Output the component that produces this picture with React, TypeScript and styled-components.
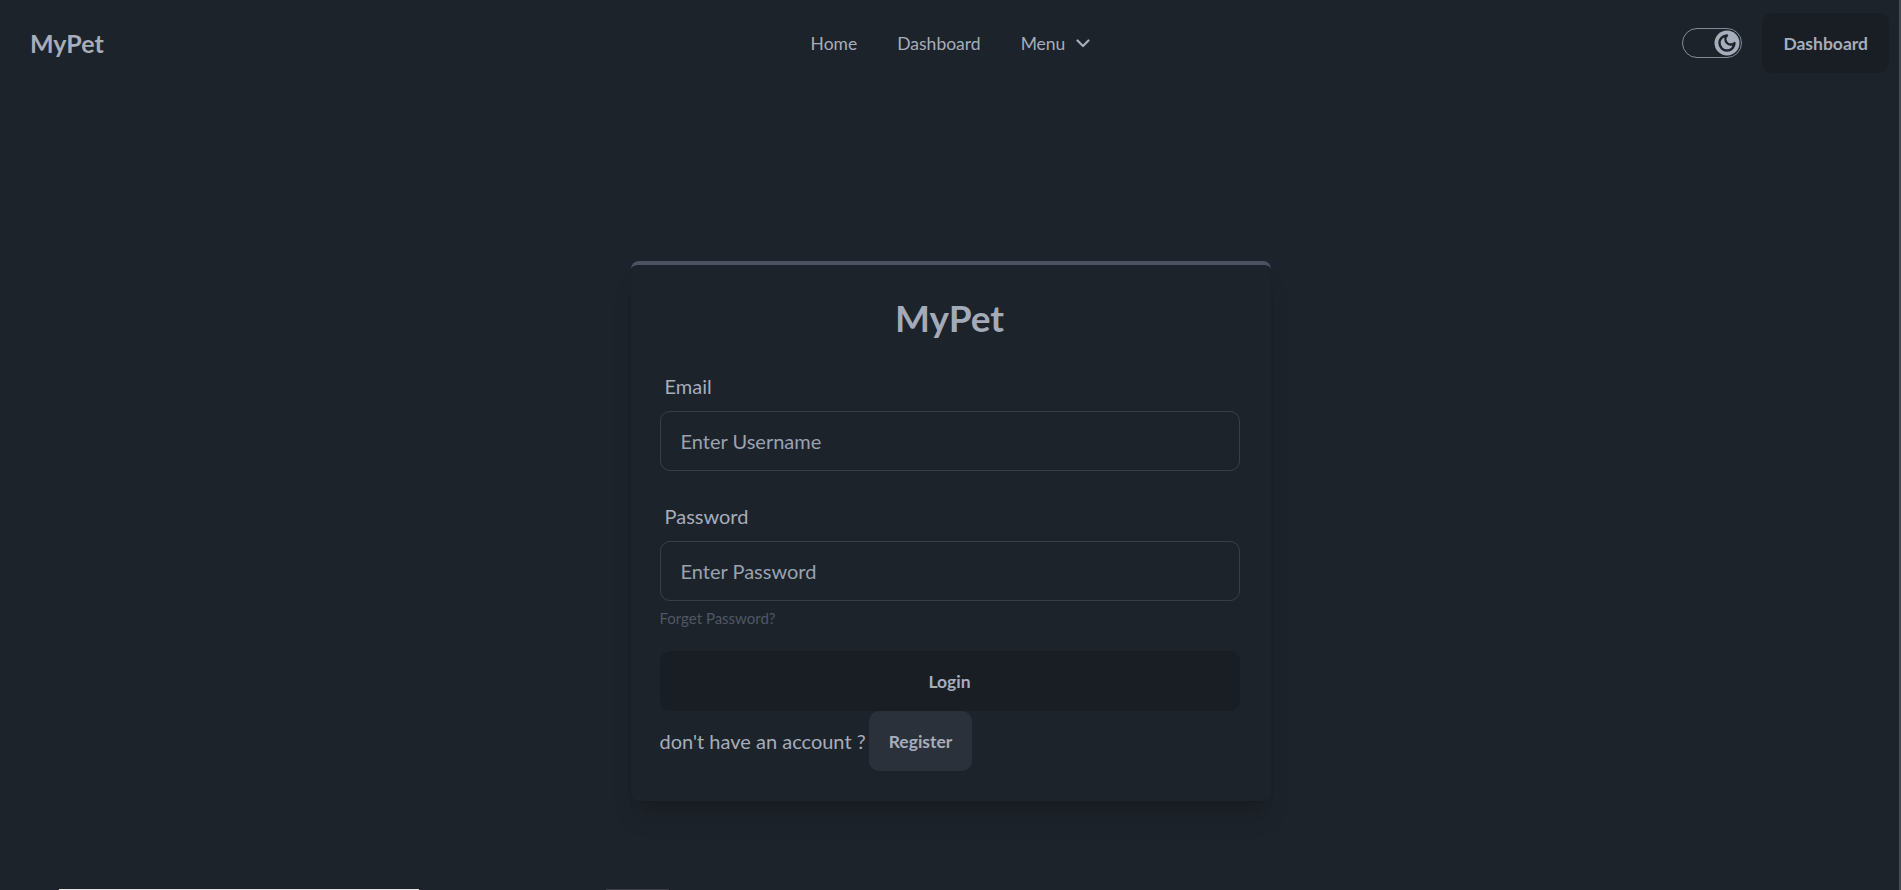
import React from "react";
import styled, { createGlobalStyle } from "styled-components";

const GlobalStyle = createGlobalStyle`
  html, body {
    margin: 0;
    padding: 0;
    background: #1d232a;
    overflow: hidden;
  }
  body {
    font-family: Lato, "Noto Sans", sans-serif;
    color: #a6adbb;
  }
  * { box-sizing: border-box; }
`;

const Page = styled.div`
  min-height: 100vh;
  background: #1d232a;
`;

const NavBar = styled.header`
  display: grid;
  grid-template-columns: 1fr auto 1fr;
  align-items: center;
  height: 86px;
  padding: 13px 12px 13px 10px;
`;

const Brand = styled.a`
  justify-self: start;
  display: inline-flex;
  align-items: center;
  height: 60px;
  padding: 0 20px;
  font-size: 25px;
  font-weight: 700;
  color: #a6adbb;
  text-decoration: none;
`;

const NavMenu = styled.ul`
  display: flex;
  align-items: center;
  list-style: none;
  margin: 0;
  padding: 0 0 0 2px;
`;

const NavLink = styled.li`
  display: flex;
  align-items: center;
  gap: 11px;
  padding: 8px 20px;
  font-size: 17.5px;
  color: #a6adbb;
`;

const NavEnd = styled.div`
  justify-self: end;
  display: flex;
  align-items: center;
  gap: 20px;
`;

const Toggle = styled.span`
  display: inline-flex;
  align-items: center;
  justify-content: flex-end;
  width: 60px;
  height: 30px;
  border: 1.5px solid rgba(166, 173, 187, 0.75);
  border-radius: 15px;
  padding: 0 1px;
`;

const Knob = styled.svg`
  display: block;
`;

const GhostButton = styled.button`
  height: 60px;
  padding: 0 21px;
  border: none;
  border-radius: 10px;
  background: #191e24;
  color: #a6adbb;
  font-family: inherit;
  font-size: 17.5px;
  font-weight: 700;
`;

const Hero = styled.main`
  min-height: 100vh;
  display: flex;
  align-items: center;
  justify-content: center;
`;

const Card = styled.section`
  width: 640px;
  background: #1d232a;
  border-top: 4px solid #4b5362;
  border-radius: 8px;
  box-shadow: 0 20px 25px -5px rgba(0, 0, 0, 0.13), 0 8px 10px -6px rgba(0, 0, 0, 0.13);
`;

const CardBody = styled.div`
  padding: 30px 31px 30px 29px;
  display: flex;
  flex-direction: column;
`;

const Title = styled.h1`
  margin: 0;
  text-align: center;
  font-size: 37px;
  line-height: 45px;
  font-weight: 700;
  color: #a3aab8;
`;

const Form = styled.form`
  margin-top: 21px;
  display: flex;
  flex-direction: column;
`;

const Field = styled.div<{ $spaced?: boolean }>`
  display: flex;
  flex-direction: column;
  margin-top: ${(p) => (p.$spaced ? "20px" : "0")};
`;

const FieldLabel = styled.label`
  display: block;
  padding: 10px 5px;
  font-size: 20px;
  line-height: 30px;
  color: #a6adbb;
`;

const TextInput = styled.input`
  width: 100%;
  height: 60px;
  padding: 0 20px;
  border: 1px solid rgba(166, 173, 187, 0.2);
  border-radius: 10px;
  background: transparent;
  font-family: inherit;
  font-size: 20px;
  color: #a6adbb;
  outline: none;
  &::placeholder {
    color: #9aa2b0;
  }
`;

const ForgotLink = styled.a`
  display: block;
  padding: 10px 0;
  font-size: 15px;
  line-height: 15px;
  color: #4f5764;
  text-decoration: none;
`;

const LoginButton = styled.button`
  margin-top: 15px;
  width: 100%;
  height: 60px;
  border: none;
  border-radius: 10px;
  background: #191e24;
  color: #a6adbb;
  font-family: inherit;
  font-size: 17.5px;
  font-weight: 700;
`;

const RegisterRow = styled.div`
  display: flex;
  align-items: center;
  font-size: 20px;
  color: #a6adbb;
`;

const RegisterButton = styled.button`
  margin-left: 3px;
  height: 60px;
  padding: 0 20px;
  border: none;
  border-radius: 10px;
  background: #2a313a;
  color: #a6adbb;
  font-family: inherit;
  font-size: 17.5px;
  font-weight: 700;
`;

const EdgeStrip = styled.div`
  position: fixed;
  top: 0;
  right: 0;
  width: 2px;
  height: 100vh;
  background: #464b52;
`;

const BottomBar = styled.div<{ $left: number; $width: number; $color: string }>`
  position: fixed;
  bottom: 0;
  left: ${(p) => p.$left}px;
  width: ${(p) => p.$width}px;
  height: 1px;
  background: ${(p) => p.$color};
`;

const Chevron = () => (
  <svg width="14" height="9" viewBox="0 0 14 9" fill="none">
    <path d="M1.5 1.5 L7 7 L12.5 1.5" stroke="#a6adbb" strokeWidth="2.2" strokeLinecap="round" strokeLinejoin="round" />
  </svg>
);

export default function App() {
  return (
    <Page>
      <GlobalStyle />
      <NavBar>
        <Brand>MyPet</Brand>
        <NavMenu>
          <NavLink>Home</NavLink>
          <NavLink>Dashboard</NavLink>
          <NavLink>
            Menu
            <Chevron />
          </NavLink>
        </NavMenu>
        <NavEnd>
          <Toggle>
            <Knob width="26" height="26" viewBox="0 0 26 26">
              <circle cx="13" cy="13" r="12.5" fill="#a6adbb" />
              <path
                d="M13 5.5a5 5 0 0 0 7.5 7.5 7.5 7.5 0 1 1-7.5-7.5Z"
                fill="none"
                stroke="#1d232a"
                strokeWidth="2.4"
                strokeLinejoin="round"
              />
            </Knob>
          </Toggle>
          <GhostButton>Dashboard</GhostButton>
        </NavEnd>
      </NavBar>
      <Hero>
        <Card>
          <CardBody>
            <Title>MyPet</Title>
            <Form onSubmit={(e) => e.preventDefault()}>
              <Field>
                <FieldLabel>Email</FieldLabel>
                <TextInput type="text" placeholder="Enter Username" />
              </Field>
              <Field $spaced>
                <FieldLabel>Password</FieldLabel>
                <TextInput type="password" placeholder="Enter Password" />
              </Field>
              <ForgotLink>Forget Password?</ForgotLink>
              <LoginButton type="button">Login</LoginButton>
              <RegisterRow>
                don't have an account ?
                <RegisterButton type="button">Register</RegisterButton>
              </RegisterRow>
            </Form>
          </CardBody>
        </Card>
      </Hero>
      <EdgeStrip />
      <BottomBar $left={59} $width={360} $color="#e6e6e6" />
      <BottomBar $left={606} $width={63} $color="#3c4048" />
    </Page>
  );
}
